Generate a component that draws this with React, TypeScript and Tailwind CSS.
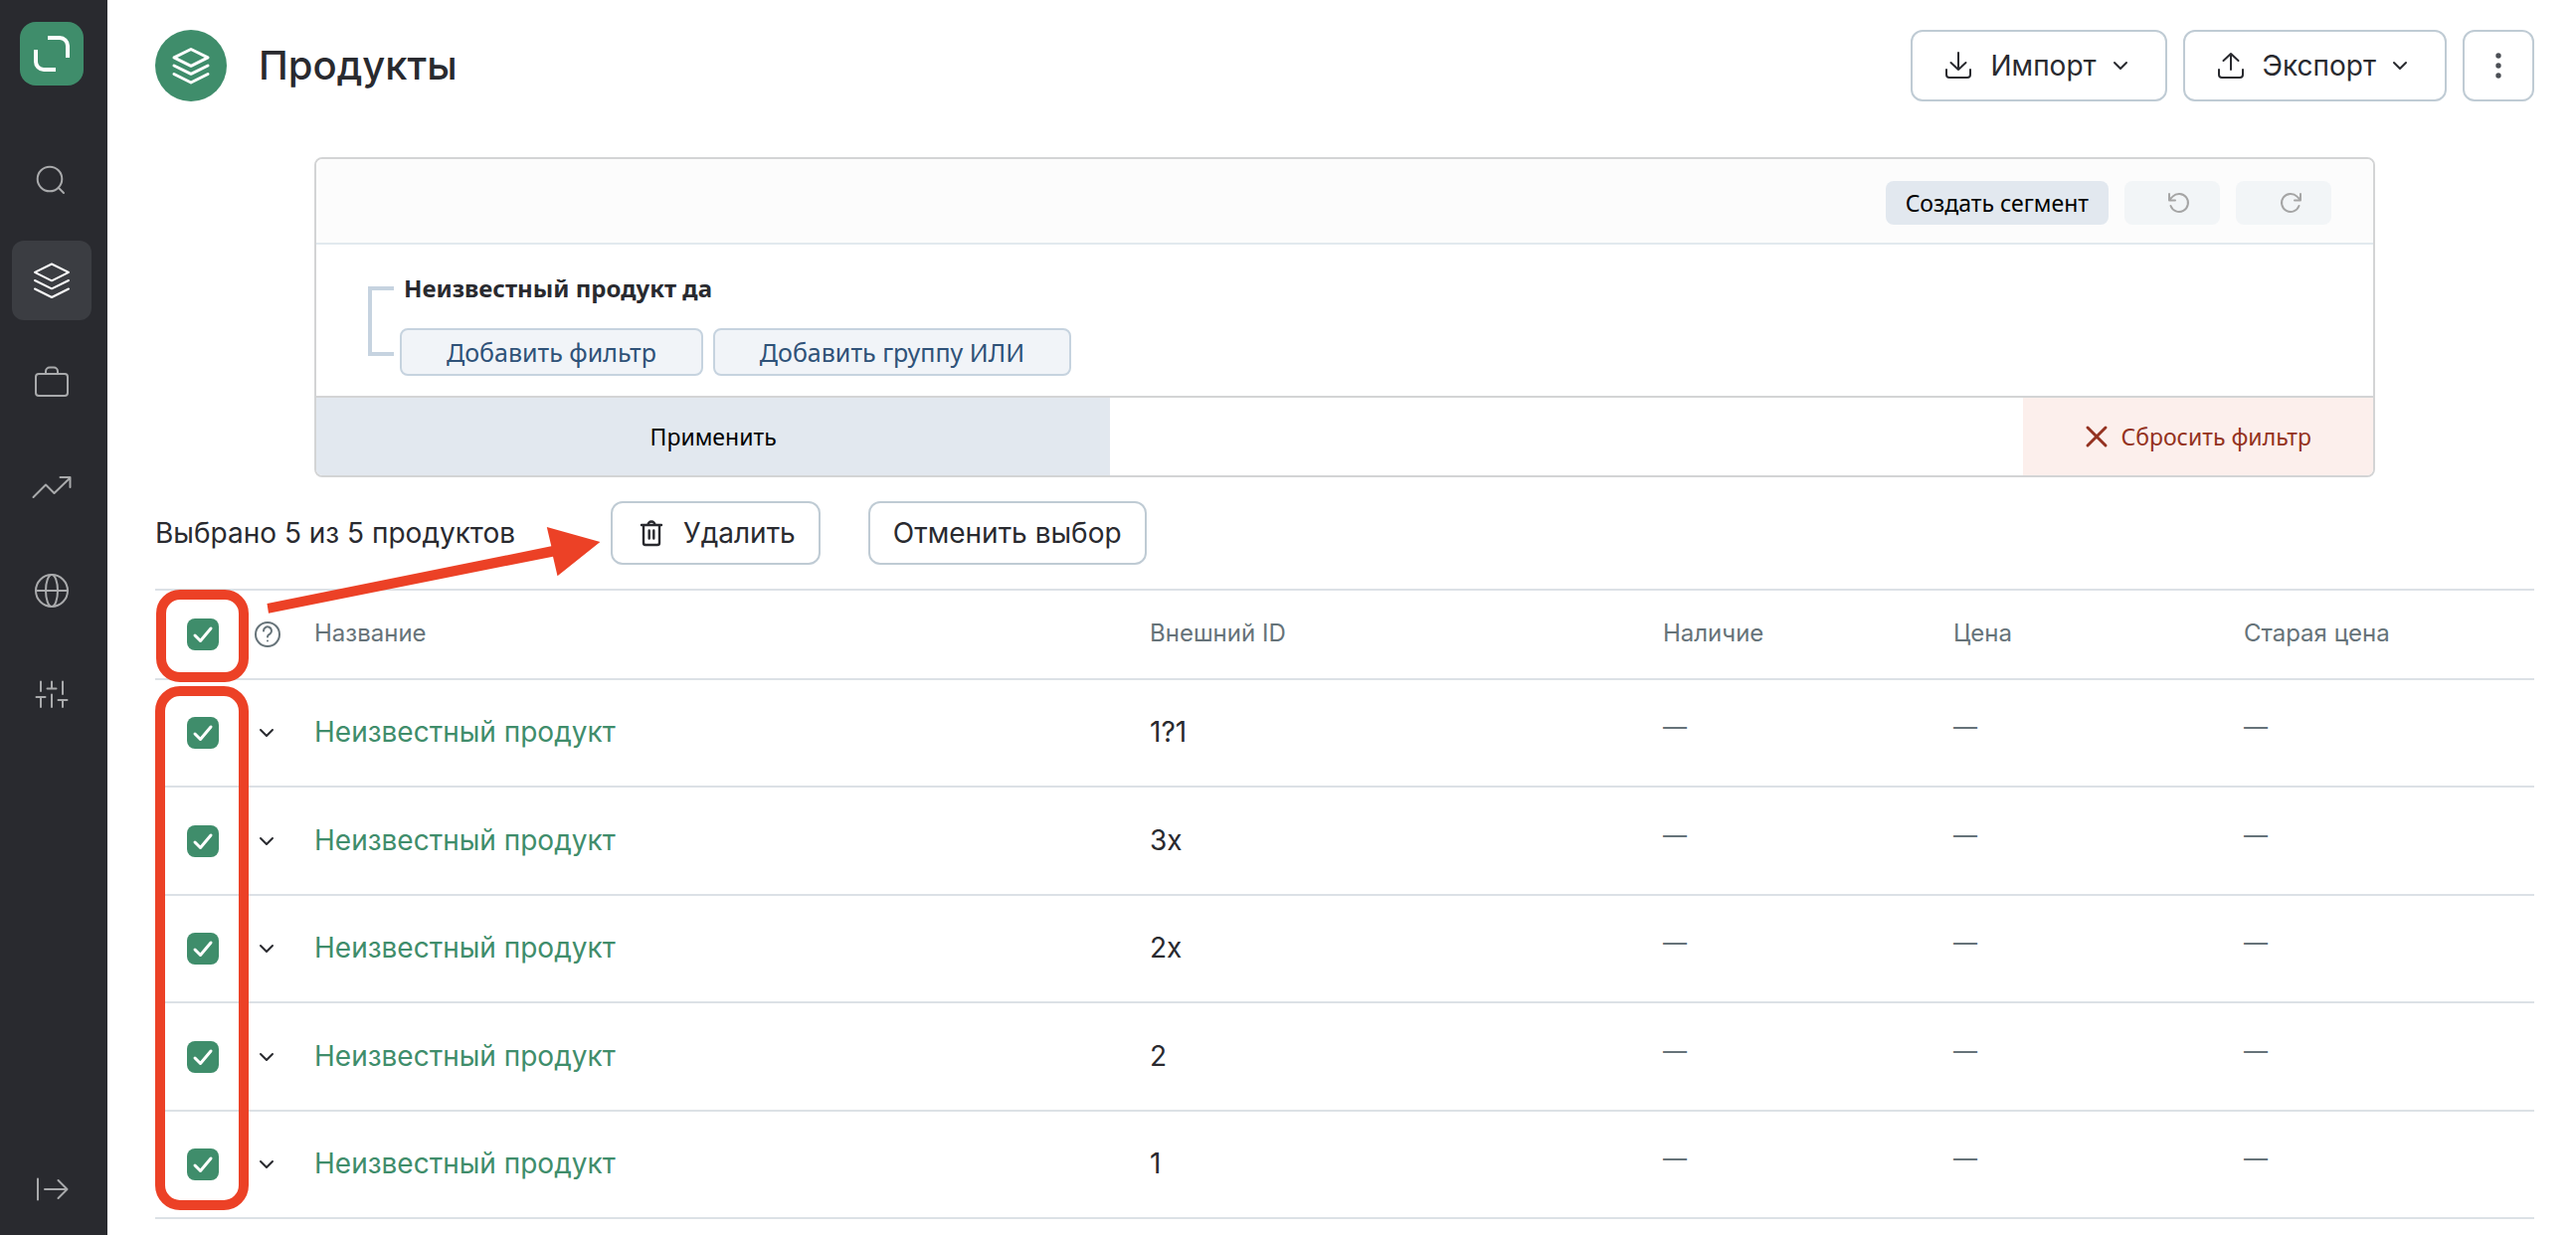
import { ReactNode, useState } from "react";

interface IconProps {
  children: ReactNode;
  size?: string;
  box?: string;
  stroke?: number;
}

function Icon({ children, size = "size-12", box = "0 0 48 48", stroke = 2 }: IconProps) {
  return (
    <svg
      className={`${size} shrink-0`}
      viewBox={box}
      fill="none"
      stroke="currentColor"
      strokeWidth={stroke}
      strokeLinecap="round"
      strokeLinejoin="round"
      aria-hidden="true"
    >
      {children}
    </svg>
  );
}

const layers = (
  <path d="M24 7.5 41 15.8 24 24.3 7 15.8zM7 24l17 8.3L41 24M7 32.5 24 41l17-8.5" />
);

const navItems = [
  {
    label: "Поиск",
    icon: (
      <>
        <circle cx="22" cy="26" r="12.3" />
        <path d="m31 35 5 5" />
      </>
    ),
  },
  { label: "Продукты", icon: layers, active: true },
  {
    label: "Заказы",
    icon: (
      <>
        <rect x="8" y="14" width="32" height="22" rx="3" />
        <path d="M18 14v-2.5a4 4 0 0 1 4-4h4a4 4 0 0 1 4 4V14" />
      </>
    ),
  },
  {
    label: "Аналитика",
    icon: <path d="M5.5 34 18 21.5l8.5 8.5L42.5 14.5M32.5 14h10v10" />,
  },
  {
    label: "Сайты",
    icon: (
      <>
        <circle cx="24" cy="24" r="16" />
        <ellipse cx="24" cy="24" rx="6" ry="16" />
        <path d="M8 24h32" />
      </>
    ),
  },
  {
    label: "Настройки",
    icon: (
      <path d="M13 11.5v9.5M8.5 27h9M13 27v10M24 11.5v7M19.5 18.5h9M24 24.5V37M35 11.5V24M30.5 30h9M35 30v7" />
    ),
  },
];

const products = [
  { id: "1?1", name: "Неизвестный продукт" },
  { id: "3x", name: "Неизвестный продукт" },
  { id: "2x", name: "Неизвестный продукт" },
  { id: "2", name: "Неизвестный продукт" },
  { id: "1", name: "Неизвестный продукт" },
];

function Sidebar() {
  return (
    <aside className="flex w-[108px] shrink-0 flex-col bg-[#292a2f] pt-[22px] pb-[6px]">
      <a href="#home" aria-label="Главная" className="ml-5 size-16 rounded-2xl bg-[#3f8d6b] text-white">
        <svg viewBox="0 0 64 64" fill="none" stroke="currentColor" strokeWidth="4">
          <path d="M28 16h12a8 8 0 0 1 8 8v12M16 28v12a8 8 0 0 0 8 8h12" />
        </svg>
      </a>
      <nav className="mt-[52px] ml-3 flex flex-col gap-6">
        {navItems.map((item) => (
          <a
            key={item.label}
            href="#section"
            aria-label={item.label}
            className={`flex size-20 items-center justify-center rounded-xl ${
              item.active ? "bg-[#3b3d42] text-white" : "text-[#a9aaac]"
            }`}
          >
            <Icon>{item.icon}</Icon>
          </a>
        ))}
      </nav>
      <button
        type="button"
        aria-label="Развернуть меню"
        className="mt-auto ml-3 flex size-20 items-center justify-center text-[#a9aaac]"
      >
        <Icon>
          <path d="M10 13.5v21M17 24h22M30.5 15l9 9-9 9" />
        </Icon>
      </button>
    </aside>
  );
}

function Chevron() {
  return (
    <Icon size="size-6" box="0 0 24 24">
      <path d="m6 9 6 6 6-6" />
    </Icon>
  );
}

function PageHeader() {
  const button =
    "flex h-[72px] items-center rounded-xl border-2 border-[#bfcbd4] bg-white text-[28px]";

  return (
    <header className="flex items-center">
      <div className="flex size-[72px] items-center justify-center rounded-full bg-[#3f8d6b] text-white">
        <Icon size="size-12" stroke={3}>{layers}</Icon>
      </div>
      <h1 className="ml-8 text-[40px] leading-[48px] font-medium">Продукты</h1>
      <div className="ml-auto flex gap-4">
        <button type="button" className={`${button} gap-3 pr-[33px] pl-[26px]`}>
          <Icon size="size-10" box="0 0 40 40">
            <path d="M20 7v17M12.5 17l7.5 7 7.5-7M8 24v5a3 3 0 0 0 3 3h18a3 3 0 0 0 3-3v-5" />
          </Icon>
          Импорт
          <Chevron />
        </button>
        <button type="button" className={`${button} gap-3 pr-[33px] pl-[26px]`}>
          <Icon size="size-10" box="0 0 40 40">
            <path d="M20 24V8M12.5 15l7.5-7 7.5 7M8 24v5a3 3 0 0 0 3 3h18a3 3 0 0 0 3-3v-5" />
          </Icon>
          Экспорт
          <Chevron />
        </button>
        <button type="button" aria-label="Ещё" className={`${button} w-[72px] justify-center text-[#4b4f55]`}>
          <svg className="size-8" viewBox="0 0 32 32" fill="currentColor">
            <circle cx="16" cy="6" r="2.7" />
            <circle cx="16" cy="16" r="2.7" />
            <circle cx="16" cy="26" r="2.7" />
          </svg>
        </button>
      </div>
    </header>
  );
}

function FilterPanel() {
  const add =
    "h-12 rounded-lg border-2 border-[#c6d3df] bg-[#f1f4f8] px-[45px] text-[25px] leading-8 text-[#2f5278]";
  const history =
    "flex h-11 w-24 items-center justify-center rounded-lg bg-[#f2f5f7] pl-3.5 text-[#a5a5a5]";

  return (
    <section className="mx-40 mt-14 overflow-hidden rounded-lg border-2 border-[#d3d4d5] font-['Noto_Sans','Open_Sans',sans-serif]">
      <div className="flex h-[86px] items-center justify-end gap-4 border-b-2 border-[#e2e9ee] bg-[#fcfcfc] pt-1 pr-[42px]">
        <button type="button" className="h-11 rounded-lg bg-[#e2e8ef] px-5 text-[23px] leading-8 text-black">
          Создать сегмент
        </button>
        <button type="button" aria-label="Отменить" disabled className={history}>
          <Icon size="size-6" box="0 0 24 24">
            <path d="M2 3v6.5h6M3.5 15a9 9 0 1 0 2-9.4L2 9" />
          </Icon>
        </button>
        <button type="button" aria-label="Повторить" disabled className={history}>
          <Icon size="size-6" box="0 0 24 24">
            <path d="M22 3v6.5h-6M20.5 15a9 9 0 1 1-2-9.4L22 9" />
          </Icon>
        </button>
      </div>
      <div className="flex h-[152px] pt-7 pl-[52px]">
        <div className="mt-[14px] h-[70px] w-[26px] border-4 border-r-0 border-[#c6d3e0]" />
        <div className="ml-1.5">
          <p className="pl-1 text-[24px] leading-8 font-bold">Неизвестный продукт да</p>
          <div className="mt-6 flex gap-2.5">
            <button type="button" className={add}>Добавить фильтр</button>
            <button type="button" className={add}>Добавить группу ИЛИ</button>
          </div>
        </div>
      </div>
      <div className="flex h-20 justify-between border-t-2 border-[#d3d4d5] text-[23px]">
        <button type="button" className="w-[38.6%] bg-[#e2e8ef] text-black">Применить</button>
        <button
          type="button"
          className="flex w-[17%] items-center justify-center gap-3 bg-[#fcefec] text-[#943220]"
        >
          <Icon size="size-6" box="0 0 24 24" stroke={3}>
            <path d="m3 3 18 18M21 3 3 21" />
          </Icon>
          Сбросить фильтр
        </button>
      </div>
    </section>
  );
}

interface CheckboxProps {
  label: string;
  checked: boolean;
  onChange: () => void;
}

function Checkbox({ label, checked, onChange }: CheckboxProps) {
  return (
    <label className="ml-8 grid size-8">
      <input
        type="checkbox"
        aria-label={label}
        checked={checked}
        onChange={onChange}
        className="col-start-1 row-start-1 size-8 appearance-none rounded-lg border-2 border-[#bfcbd4] checked:border-0 checked:bg-[#3f8d6b]"
      />
      {checked && (
        <svg
          className="pointer-events-none col-start-1 row-start-1 size-8 text-white"
          viewBox="0 0 32 32"
          fill="none"
          stroke="currentColor"
          strokeWidth="3"
          strokeLinecap="round"
          strokeLinejoin="round"
        >
          <path d="m8 17 5.5 5.5L24 10" />
        </svg>
      )}
    </label>
  );
}

// Red frames and arrow that point from the checkboxes to the delete button
function Annotations() {
  return (
    <svg
      className="pointer-events-none absolute top-0 left-0 h-[722px] w-[460px] text-[#ec4126]"
      viewBox="0 0 460 722"
      fill="none"
      aria-hidden="true"
    >
      <rect x="6" y="94" width="83" height="83" rx="19" stroke="currentColor" strokeWidth="10" />
      <rect x="5" y="191" width="84" height="517" rx="20" stroke="currentColor" strokeWidth="10" />
      <path
        d="M112.5 103 398.3 45.3 393.8 26 447.4 41 404.5 75.3 400 55.7 114 112.7z"
        fill="currentColor"
      />
    </svg>
  );
}

export default function App() {
  const [selected, setSelected] = useState<string[]>(products.map((p) => p.id));
  const allSelected = selected.length === products.length;
  const action = "flex h-16 items-center rounded-xl border-2 border-[#bfcbd4] bg-white px-[23px]";
  const empty = "pb-3 text-[24px] text-[#667379]";

  const toggle = (id: string) =>
    setSelected((prev) => (prev.includes(id) ? prev.filter((x) => x !== id) : [...prev, id]));

  return (
    <div className="flex min-h-screen bg-white font-[Inter,'Liberation_Sans',sans-serif] text-[28px] text-[#292a2f]">
      <Sidebar />
      <main className="min-w-0 grow pt-[30px] pr-[42px] pl-12">
        <PageHeader />
        <FilterPanel />

        <section className="relative mt-6">
          <div className="flex h-16 items-center">
            <p>Выбрано {selected.length} из {products.length} продуктов</p>
            <button type="button" className={`${action} ml-24 gap-4`}>
              <Icon size="size-8" box="0 0 32 32" stroke={2.4}>
                <path d="M6 8h20M8 8v18a2 2 0 0 0 2 2h12a2 2 0 0 0 2-2V8M12.5 8a3.5 3.5 0 0 1 7 0M13.7 13.5v8M18.3 13.5v8" />
              </Icon>
              Удалить
            </button>
            <button type="button" className={`${action} ml-12`} onClick={() => setSelected([])}>
              Отменить выбор
            </button>
          </div>

          <table className="mt-6 w-full table-fixed border-collapse text-left">
            <thead>
              <tr className="h-[90px] border-y-2 border-[#dce1e6] text-[24px] text-[#667379]">
                <th className="w-[100px]">
                  <Checkbox
                    label="Выбрать все"
                    checked={allSelected}
                    onChange={() => setSelected(allSelected ? [] : products.map((p) => p.id))}
                  />
                </th>
                <th className="w-[60px]">
                  <Icon size="size-[26px]" box="0 0 26 26">
                    <circle cx="13" cy="13" r="12" />
                    <path d="M9 9.5a4 4 0 1 1 6.5 3c-1.3.9-2.5 1.2-2.5 3M13 19.5v.1" />
                  </Icon>
                </th>
                <th className="pb-0.5 font-normal">Название</th>
                <th className="w-[516px] pb-0.5 font-normal">Внешний ID</th>
                <th className="w-[292px] pb-0.5 font-normal">Наличие</th>
                <th className="w-[292px] pb-0.5 font-normal">Цена</th>
                <th className="w-[292px] pb-0.5 font-normal">Старая цена</th>
              </tr>
            </thead>
            <tbody>
              {products.map((p) => (
                <tr key={p.id} className="border-b-2 border-[#dce1e6] odd:h-[108px] even:h-[109px]">
                  <td>
                    <Checkbox
                      label={`Выбрать ${p.id}`}
                      checked={selected.includes(p.id)}
                      onChange={() => toggle(p.id)}
                    />
                  </td>
                  <td>
                    <button type="button" aria-label="Развернуть" className="block">
                      <Chevron />
                    </button>
                  </td>
                  <td className="pb-0.5">
                    <a href="#product" className="text-[#3f8d6b]">{p.name}</a>
                  </td>
                  <td className="pb-0.5">{p.id}</td>
                  <td className={empty}>—</td>
                  <td className={empty}>—</td>
                  <td className={empty}>—</td>
                </tr>
              ))}
            </tbody>
          </table>
          <Annotations />
        </section>
      </main>
    </div>
  );
}
